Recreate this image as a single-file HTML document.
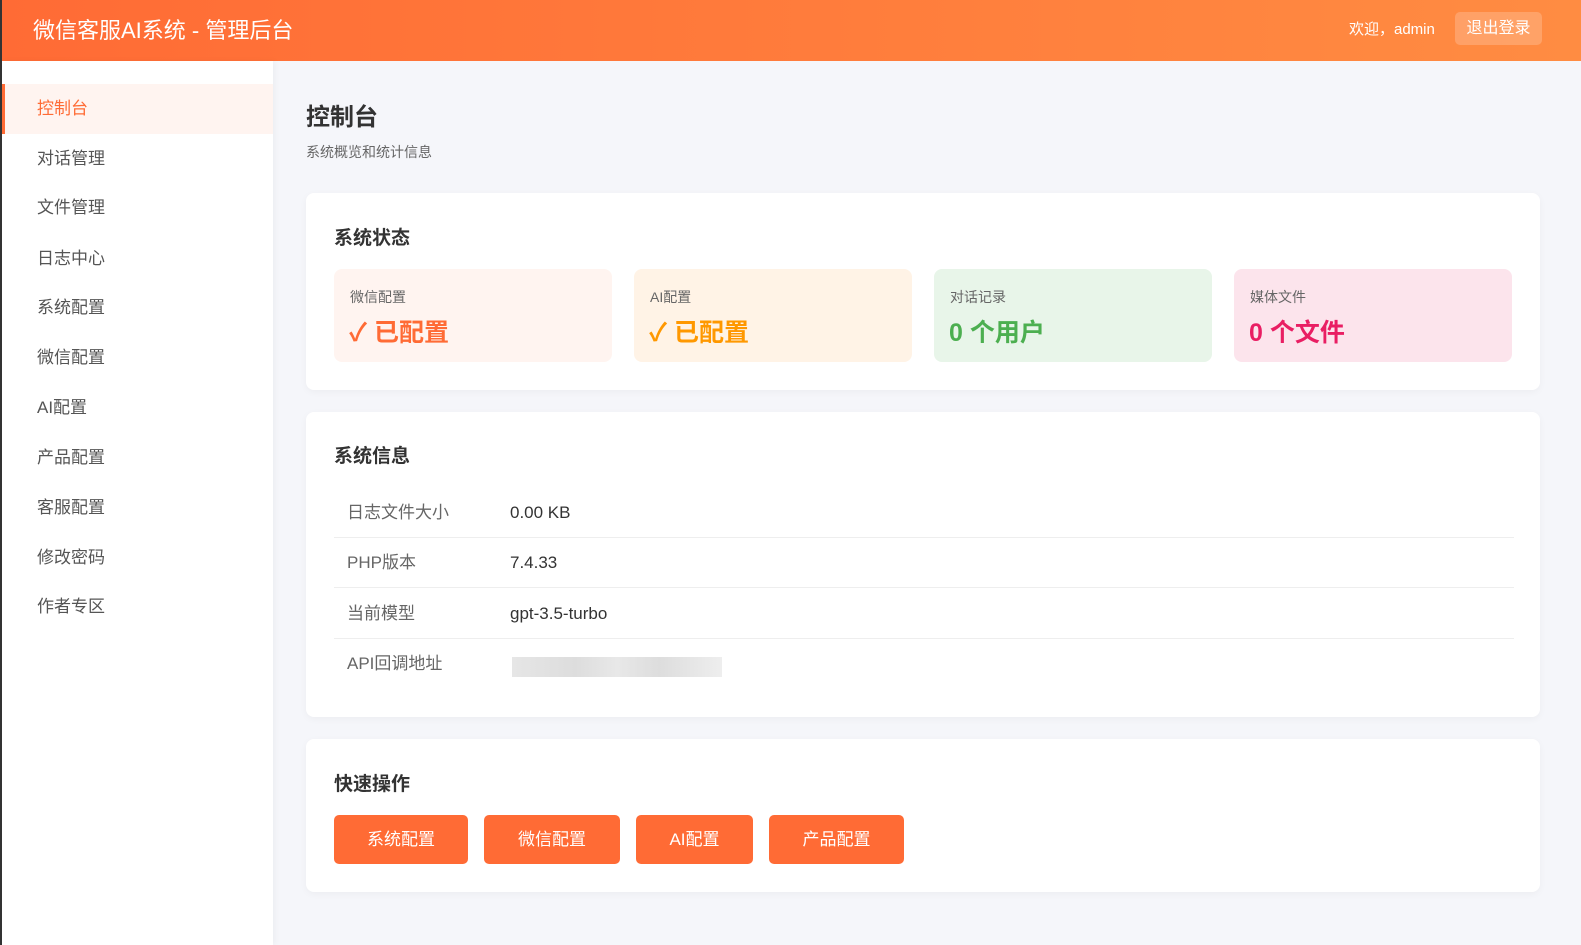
<!DOCTYPE html>
<html><head><meta charset="utf-8"><style>
*{margin:0;padding:0;box-sizing:border-box}
body{width:1581px;height:945px;overflow:hidden;background:#f5f6fa;font-family:"Liberation Sans","Noto Sans CJK SC",sans-serif;position:relative}
.lb{position:absolute;left:0;top:0;width:2px;height:945px;background:#333}
.hd{position:absolute;left:2px;top:0;width:1579px;height:61px;background:linear-gradient(90deg,#ff6b35,#ff8c42);color:#fff}
.hd .t{position:absolute;left:31px;top:0;line-height:61px;font-size:22px}
.hd .w{position:absolute;left:1347px;top:0;line-height:59px;font-size:15px}
.hd .b{position:absolute;left:1453px;top:12px;width:87px;height:33px;background:rgba(255,255,255,.2);border-radius:5px;font-size:16px;text-align:center;line-height:33px}
.sb{position:absolute;left:2px;top:61px;width:271px;height:884px;background:#fff;box-shadow:2px 0 6px rgba(0,0,0,.04)}
.it{position:absolute;left:0;width:271px;height:50px;font-size:17px;color:#555;padding-left:35px;line-height:50px}
.it.a{background:#fff4f0;color:#ff6b35;border-left:3px solid #ff6b35;padding-left:32px}
h1{position:absolute;left:306px;top:97px;font-size:24px;color:#333}
.sub{position:absolute;left:306px;top:142px;font-size:14px;color:#666}
.card{position:absolute;left:306px;width:1234px;background:#fff;border-radius:8px;box-shadow:0 2px 8px rgba(0,0,0,.04)}
.card h2{position:absolute;left:28px;font-size:19px;color:#333}
.st{position:absolute;top:76px;width:278px;height:93px;border-radius:8px}
.st .l{position:absolute;left:16px;top:18px;font-size:14px;color:#666}
.st .v{position:absolute;left:15px;top:44px;font-size:25px;font-weight:bold}
.row{position:absolute;left:28px;width:1180px;height:50px;border-bottom:1px solid #eee;font-size:17px;line-height:50px}
.row span{position:absolute;top:0}
.row .k{left:13px;color:#666}.row .vv{left:176px;color:#333}
.btn{position:absolute;top:76px;height:49px;background:#ff6b35;color:#fff;border-radius:5px;font-size:17px;text-align:center;line-height:49px}
</style></head><body>
<div class="lb"></div>
<div class="hd"><div class="t">微信客服AI系统 - 管理后台</div><div class="w">欢迎，admin</div><div class="b">退出登录</div></div>
<div class="sb">
<div class="it a" style="top:23px">控制台</div>
<div class="it" style="top:73px">对话管理</div>
<div class="it" style="top:122px">文件管理</div>
<div class="it" style="top:173px">日志中心</div>
<div class="it" style="top:222px">系统配置</div>
<div class="it" style="top:272px">微信配置</div>
<div class="it" style="top:322px">AI配置</div>
<div class="it" style="top:372px">产品配置</div>
<div class="it" style="top:422px">客服配置</div>
<div class="it" style="top:472px">修改密码</div>
<div class="it" style="top:521px">作者专区</div>
</div>
<h1>控制台</h1>
<div class="sub">系统概览和统计信息</div>
<div class="card" style="top:193px;height:197px">
<h2 style="top:30px">系统状态</h2>
<div class="st" style="left:28px;background:#fff4f0"><div class="l">微信配置</div><div class="v" style="color:#ff6b35">✓ 已配置</div></div>
<div class="st" style="left:328px;background:#fff3e6"><div class="l">AI配置</div><div class="v" style="color:#ff9800">✓ 已配置</div></div>
<div class="st" style="left:628px;background:#e8f5e9"><div class="l">对话记录</div><div class="v" style="color:#4caf50">0 个用户</div></div>
<div class="st" style="left:928px;background:#fce4ec"><div class="l">媒体文件</div><div class="v" style="color:#e91e63">0 个文件</div></div>
</div>
<div class="card" style="top:412px;height:305px">
<h2 style="top:29px">系统信息</h2>
<div class="row" style="top:76px"><span class="k">日志文件大小</span><span class="vv">0.00 KB</span></div>
<div class="row" style="top:126px"><span class="k">PHP版本</span><span class="vv">7.4.33</span></div>
<div class="row" style="top:177px"><span class="k">当前模型</span><span class="vv">gpt-3.5-turbo</span></div>
<div class="row" style="top:227px;border:none"><span class="k">API回调地址</span><span style="left:178px;top:18px;width:210px;height:20px;background:linear-gradient(90deg,#e6e6e6,#ddd 30%,#e8e8e8 50%,#ddd 70%,#eee)"></span></div>
</div>
<div class="card" style="top:739px;height:153px">
<h2 style="top:30px">快速操作</h2>
<div class="btn" style="left:28px;width:134px">系统配置</div>
<div class="btn" style="left:178px;width:136px">微信配置</div>
<div class="btn" style="left:330px;width:117px">AI配置</div>
<div class="btn" style="left:463px;width:135px">产品配置</div>
</div>
</body></html>
